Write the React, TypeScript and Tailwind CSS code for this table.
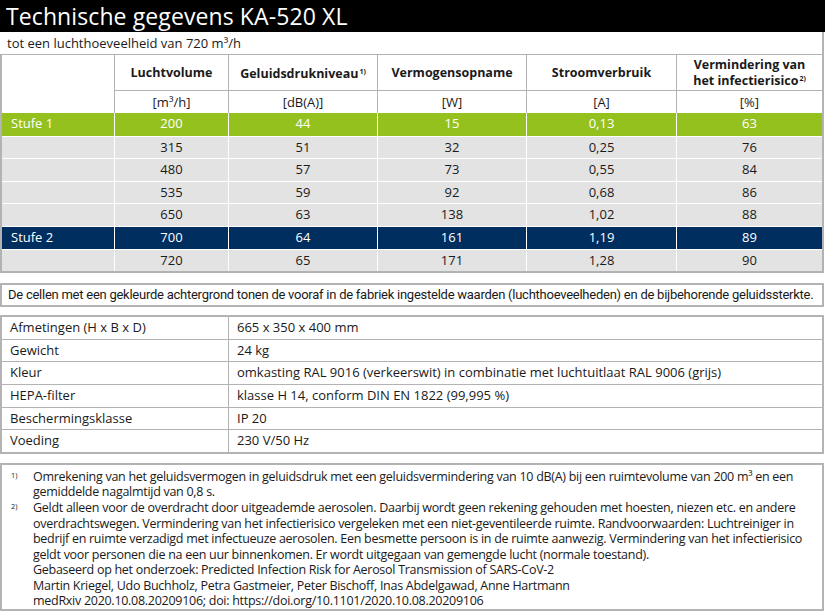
import React from 'react';

const font = { fontFamily: '"Open Sans", "Noto Sans", sans-serif' };

const widths = ['w-[113px]', 'w-[114px]', 'w-[149px]', 'w-[149px]', 'w-[150px]', 'flex-1'];

const rows = [
  { label: 'Stufe 1', kind: 'green', values: ['200', '44', '15', '0,13', '63'] },
  { label: '', kind: 'gray', values: ['315', '51', '32', '0,25', '76'] },
  { label: '', kind: 'gray', values: ['480', '57', '73', '0,55', '84'] },
  { label: '', kind: 'gray', values: ['535', '59', '92', '0,68', '86'] },
  { label: '', kind: 'gray', values: ['650', '63', '138', '1,02', '88'] },
  { label: 'Stufe 2', kind: 'navy', values: ['700', '64', '161', '1,19', '89'] },
  { label: '', kind: 'gray', values: ['720', '65', '171', '1,28', '90'] },
];

const specs = [
  ['Afmetingen (H x B x D)', '665 x 350 x 400 mm'],
  ['Gewicht', '24 kg'],
  ['Kleur', 'omkasting RAL 9016 (verkeerswit) in combinatie met luchtuitlaat RAL 9006 (grijs)'],
  ['HEPA-filter', 'klasse H 14, conform DIN EN 1822 (99,995 %)'],
  ['Beschermingsklasse', 'IP 20'],
  ['Voeding', '230 V/50 Hz'],
];

export default function App() {
  const rowBg = (kind: string) =>
    kind === 'green' ? 'bg-[#95c11f] text-white' : kind === 'navy' ? 'bg-[#002e5f] text-white' : 'bg-[#e3e3e3] text-[#1a1a1a]';

  return (
    <div className="w-[825px] h-[611px] bg-white text-[#1a1a1a] overflow-hidden" style={font}>
      {/* Title */}
      <div className="h-[32px] bg-black text-white text-[23px] leading-[32px] pl-[6px] tracking-[0.1px]">
        Technische gegevens KA-520 XL
      </div>
      <div className="w-[824px] h-[22px] text-[13px] leading-[22px] pl-[7px] border-r-2 border-[#b3b3b3]">
        tot een luchthoeveelheid van 720 m³/h
      </div>

      {/* Main table */}
      <div className="w-[824px] border-2 border-t border-[#b3b3b3]">
        <div className="flex">
          <div className="w-[113px] h-[58px] border-r border-[#b3b3b3]" />
          <div className="flex-1 flex flex-col">
            <div className="flex h-[36px] border-b border-[#b3b3b3] text-[12.5px] font-bold leading-[14px]">
              <div className={`${widths[1]} border-r border-[#b3b3b3] flex items-center justify-center`}>Luchtvolume</div>
              <div className={`${widths[2]} border-r border-[#b3b3b3] flex items-center justify-center`}>
                <span>
                  Geluidsdrukniveau<span className="text-[7px] ml-[1px] align-[4px]">1)</span>
                </span>
              </div>
              <div className={`${widths[3]} border-r border-[#b3b3b3] flex items-center justify-center`}>Vermogensopname</div>
              <div className={`${widths[4]} border-r border-[#b3b3b3] flex items-center justify-center`}>Stroomverbruik</div>
              <div className="flex-1 flex items-center justify-center text-center pt-[1px]">
                <span>
                  Vermindering van
                  <br />
                  het infectierisico<span className="text-[7px] ml-[1px] align-[4px]">2)</span>
                </span>
              </div>
            </div>
            <div className="flex h-[22px] text-[13px] leading-[22px] text-center">
              <div className={`${widths[1]} border-r border-[#b3b3b3]`}>[m³/h]</div>
              <div className={`${widths[2]} border-r border-[#b3b3b3]`}>[dB(A)]</div>
              <div className={`${widths[3]} border-r border-[#b3b3b3]`}>[W]</div>
              <div className={`${widths[4]} border-r border-[#b3b3b3]`}>[A]</div>
              <div className="flex-1">[%]</div>
            </div>
          </div>
        </div>
        {rows.map((r, i) => (
          <div key={i} className={`flex h-[22.6px] text-[13px] leading-[21px] ${rowBg(r.kind)} ${i === 0 ? '' : 'border-t-[1.5px] border-white'}`}>
            <div className={`${widths[0]} border-r border-white pl-[9px]`}>{r.label}</div>
            {r.values.map((v, j) => (
              <div key={j} className={`${widths[j + 1]} text-center ${j < 4 ? 'border-r border-white' : ''}`}>
                {v}
              </div>
            ))}
          </div>
        ))}
      </div>

      {/* Note */}
      <div
        className="mt-[10px] w-[824px] h-[24px] border-2 border-[#b3b3b3] text-[13px] leading-[20px] pl-[6px] tracking-[-0.25px]"
        style={{ fontFamily: 'Roboto, "Open Sans", sans-serif' }}
      >
        De cellen met een gekleurde achtergrond tonen de vooraf in de fabriek ingestelde waarden (luchthoeveelheden) en de bijbehorende geluidssterkte.
      </div>

      {/* Specs */}
      <div className="mt-[8px] w-[824px] border-2 border-b border-[#b3b3b3] text-[13px]">
        {specs.map(([k, v], i) => (
          <div key={i} className="flex h-[22.6px] leading-[21px] border-b border-[#b3b3b3]">
            <div className="w-[227px] border-r border-[#b3b3b3] pl-[8px]">{k}</div>
            <div className="flex-1 pl-[8px]">{v}</div>
          </div>
        ))}
      </div>

      {/* Footnotes */}
      <div className="mt-[9px] w-[824px] h-[148px] border-2 border-[#b3b3b3] text-[12.5px] leading-[15.6px] pt-[4px] pr-[6px] tracking-[-0.28px]">
        <div className="flex">
          <div className="w-[31px] pl-[9px] text-[7.5px] leading-[12px] shrink-0 tracking-normal">1)</div>
          <div>
            Omrekening van het geluidsvermogen in geluidsdruk met een geluidsvermindering van 10 dB(A) bij een ruimtevolume van 200 m³ en een gemiddelde nagalmtijd van 0,8 s.
          </div>
        </div>
        <div className="flex">
          <div className="w-[31px] pl-[9px] text-[7.5px] leading-[12px] shrink-0 tracking-normal">2)</div>
          <div>
            Geldt alleen voor de overdracht door uitgeademde aerosolen. Daarbij wordt geen rekening gehouden met hoesten, niezen etc. en andere overdrachtswegen. Vermindering van het infectierisico vergeleken met een niet-geventileerde ruimte. Randvoorwaarden: Luchtreiniger in bedrijf en ruimte verzadigd met infectueuze aerosolen. Een besmette persoon is in de ruimte aanwezig. Vermindering van het infectierisico geldt voor personen die na een uur binnenkomen. Er wordt uitgegaan van gemengde lucht (normale toestand).
            <br />
            Gebaseerd op het onderzoek: Predicted Infection Risk for Aerosol Transmission of SARS-CoV-2
            <br />
            Martin Kriegel, Udo Buchholz, Petra Gastmeier, Peter Bischoff, Inas Abdelgawad, Anne Hartmann
            <br />
            medRxiv 2020.10.08.20209106; doi: https://doi.org/10.1101/2020.10.08.20209106
          </div>
        </div>
      </div>
    </div>
  );
}
